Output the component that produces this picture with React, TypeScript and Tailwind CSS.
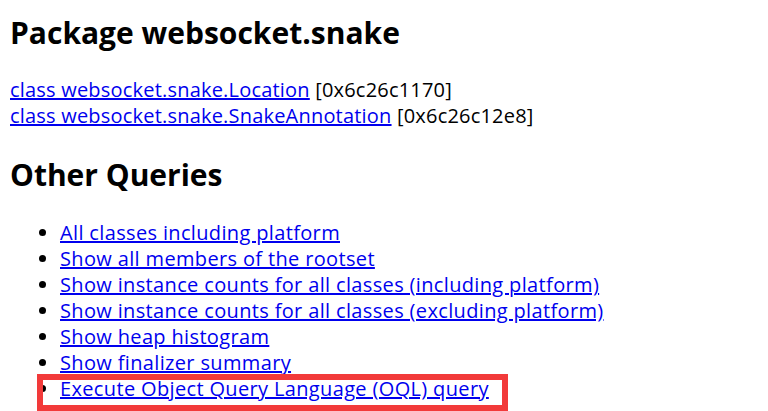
import React from "react"

const queries = [
  "All classes including platform",
  "Show all members of the rootset",
  "Show instance counts for all classes (including platform)",
  "Show instance counts for all classes (excluding platform)",
  "Show heap histogram",
  "Show finalizer summary",
]

export default function App() {
  return (
    <div
      className="h-[411px] w-[768px] overflow-hidden bg-white pl-[10px] text-[20px] text-black"
      style={{ fontFamily: '"Open Sans", "Noto Sans", sans-serif' }}
    >
      <h2 className="mt-[13px] text-[30px] font-bold leading-[40px]">Package websocket.snake</h2>
      <div className="mt-[24px] leading-[26px] tracking-[0.2px]">
        <div>
          <a href="#" className="text-[#0000ee] underline decoration-[1.5px]">
            class websocket.snake.Location
          </a>{" "}
          [0x6c26c1170]
        </div>
        <div>
          <a href="#" className="text-[#0000ee] underline decoration-[1.5px]">
            class websocket.snake.SnakeAnnotation
          </a>{" "}
          [0x6c26c12e8]
        </div>
      </div>
      <h2 className="mt-[26px] text-[30px] font-bold leading-[40px]">Other Queries</h2>
      <ul className="mt-[25px] list-disc pl-[50px] leading-[26px] tracking-[0.35px]">
        {queries.map((q) => (
          <li key={q}>
            <a href="#" className="text-[#0000ee] underline decoration-[1.5px]">
              {q}
            </a>
          </li>
        ))}
        <li className="relative">
          <a href="#" className="text-[#0000ee] underline decoration-[1.5px]">
            Execute Object Query Language (OQL) query
          </a>
          <span className="absolute left-[-23px] top-[-2px] h-[37px] w-[471px] border-[6px] border-[#f23a3a]" />
        </li>
      </ul>
    </div>
  )
}
